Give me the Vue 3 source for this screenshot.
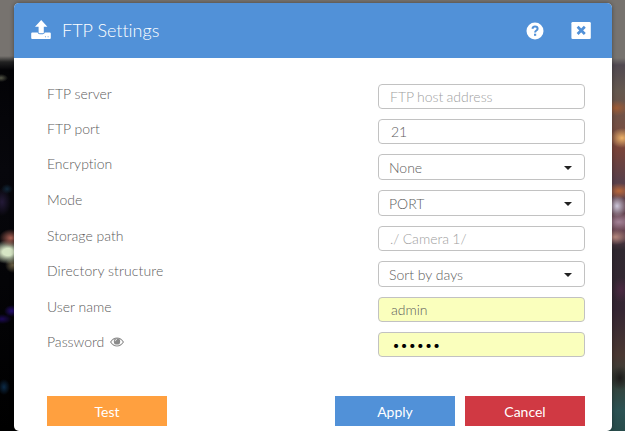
<script setup>
import { ref } from 'vue'

const fields = ref([
  { label: 'FTP server', type: 'text', value: '', placeholder: 'FTP host address' },
  { label: 'FTP port', type: 'text', value: '21' },
  { label: 'Encryption', type: 'select', value: 'None' },
  { label: 'Mode', type: 'select', value: 'PORT' },
  { label: 'Storage path', type: 'text', value: '', placeholder: './ Camera 1/' },
  { label: 'Directory structure', type: 'select', value: 'Sort by days', spaced: true },
  { label: 'User name', type: 'text', value: 'admin', filled: true },
  { label: 'Password', type: 'password', value: '••••••', filled: true }
])
</script>

<template>
  <div class="page">
    <div class="scene left"></div>
    <section class="dialog">
      <header class="head">
        <svg class="upload" viewBox="0 0 20 20" width="20" height="20">
          <path fill="#fff" d="M10.2 0 16.4 6.8H12.8V12.4Q12.8 13.3 11.9 13.3H8.5Q7.6 13.3 7.6 12.4V6.8H4Z" />
          <path fill="#fff" d="M1.2 12.4H6.6Q7 14.2 8.7 14.2H11.7Q13.4 14.2 13.8 12.4H18.8Q19.8 12.4 19.8 13.4V18Q19.8 19 18.8 19H1.2Q.2 19 .2 18V13.4Q.2 12.4 1.2 12.4Z" />
          <circle cx="14.4" cy="16.7" r=".55" fill="#5191d8" /><circle cx="17.1" cy="16.7" r=".55" fill="#5191d8" />
        </svg>
        <h1>FTP Settings</h1>
        <svg class="help" viewBox="0 0 18 18" width="18" height="18">
          <circle cx="9" cy="9" r="8.5" fill="#fff" />
          <path d="M6.4 6.7C6.7 5.2 7.6 4.6 9 4.6C10.5 4.6 11.6 5.4 11.6 6.7C11.6 8.6 9.1 8.5 9.1 10.5" fill="none" stroke="#5191d8" stroke-width="2" />
          <rect x="8" y="11.7" width="2.2" height="2.1" fill="#5191d8" />
        </svg>
        <svg class="close" viewBox="0 0 20 17" width="20" height="17">
          <rect x=".4" width="19.4" height="17" rx="1.3" fill="#fff" />
          <path d="M6.6 4.8 13.8 12M13.8 4.8 6.6 12" stroke="#5191d8" stroke-width="2.7" />
        </svg>
      </header>
      <div class="form">
        <div v-for="f in fields" :key="f.label" class="row">
          <div class="label" :class="{ spaced: f.spaced }">
            {{ f.label }}
            <svg v-if="f.type === 'password'" class="eye" viewBox="0 0 14 10" width="14" height="10">
              <path d="M.6 5Q3.2 1 7 1T13.4 5Q10.8 9 7 9T.6 5Z" fill="none" stroke="#8b8b8b" stroke-width="1.1" />
              <circle cx="7" cy="4.4" r="3.2" fill="#8b8b8b" />
              <path d="M5.1 4.2Q5.2 2.5 7 2.4" fill="none" stroke="#fff" stroke-width=".7" />
            </svg>
          </div>
          <div class="control" :class="[f.type, { filled: f.filled }]">
            <span :class="{ placeholder: !f.value }">{{ f.value || f.placeholder }}</span>
            <i v-if="f.type === 'select'" class="caret"></i>
          </div>
        </div>
      </div>
      <footer class="actions">
        <button class="test">Test</button>
        <button class="apply">Apply</button>
        <button class="cancel">Cancel</button>
      </footer>
    </section>
    <div class="scene right"></div>
  </div>
</template>

<style>
body { overflow: hidden; }
</style>

<style scoped>
.page {
  box-sizing: border-box;
  width: 625px;
  height: 431px;
  padding: 3px 13px 0 14px;
  position: relative;
  background: #77736f;
  font-family: Lato, sans-serif;
  font-weight: 300;
  font-size: 14px;
  font-variant-ligatures: none;
  color: #5c5c5c;
}
.scene { position: absolute; top: 0; bottom: 0; width: 24px; }
.left {
  left: 0;
  background:
    radial-gradient(ellipse 7px 4px at 1px 78px, #555748, transparent),
    radial-gradient(ellipse 6px 5px at 7px 189px, #11283a, transparent),
    radial-gradient(ellipse 9px 14px at 2px 202px, #241a38, transparent),
    radial-gradient(ellipse 12px 9px at 11px 238px, #b06558, transparent),
    radial-gradient(ellipse 18px 12px at 8px 252px, #d6e5c4 30%, transparent),
    radial-gradient(ellipse 8px 8px at 13px 265px, #756a4d, transparent),
    radial-gradient(ellipse 8px 6px at 12px 311px, #281078, transparent),
    radial-gradient(ellipse 10px 5px at 2px 319px, #1d0a58, transparent),
    radial-gradient(ellipse 6px 8px at 4px 387px, #0c2b48, transparent),
    linear-gradient(#77736f 0 56px, #222 62px, #030306 70px, #07070c 170px, #000 431px);
}
.right {
  right: 0;
  background:
    radial-gradient(ellipse 12px 10px at 21px 138px, #edb269, transparent),
    radial-gradient(ellipse 14px 8px at 15px 108px, #a05c35, transparent),
    radial-gradient(ellipse 14px 8px at 18px 191px, #b9683b, transparent),
    radial-gradient(ellipse 10px 11px at 16px 206px, #ccc6d9, transparent),
    radial-gradient(ellipse 16px 9px at 18px 222px, #a48297, transparent),
    radial-gradient(ellipse 14px 8px at 14px 237px, #b98a80, transparent),
    radial-gradient(ellipse 9px 13px at 20px 290px, #4b2942, transparent),
    radial-gradient(ellipse 10px 12px at 19px 378px, #1d1b1a, transparent),
    linear-gradient(#77736f 0 58px, #514951 65px, #64584f 90px, #755044 125px, #784339 150px, #59404a 180px, #694552 230px, #302830 250px, #352633 310px, #4a3832 355px, #34423b 385px, #2c5253 410px, #284c4b 431px);
}
.dialog {
  position: relative;
  z-index: 1;
  box-sizing: border-box;
  height: 428px;
  background: #fff;
  border-radius: 5px;
  box-shadow: 0 0 4px rgba(0, 0, 0, .4);
  overflow: hidden;
}
.head {
  box-sizing: border-box;
  height: 55px;
  padding: 0 21px 0 17px;
  display: flex;
  align-items: center;
  background: #5191d8;
}
h1 { flex: 1; margin: 0 0 1px 11px; font-size: 18px; line-height: 24px; font-weight: 300; color: #fff; }
.upload { margin-bottom: 2px; }
.close { margin-left: 27px; }
.form { display: grid; gap: 10px; padding: 26px 27px 0 33px; }
.row { display: flex; justify-content: space-between; align-items: flex-start; }
.label { display: flex; align-items: center; gap: 6px; line-height: 20px; height: 20px; }
.spaced { letter-spacing: .1px; }
.control {
  box-sizing: border-box;
  width: 207px;
  height: 25px;
  padding: 1px 12px 0;
  display: flex;
  align-items: center;
  justify-content: space-between;
  border: 1px solid #c2c2c2;
  border-radius: 4px;
  background: #fff;
  line-height: 22px;
}
.select { height: 26px; padding-left: 10px; }
.placeholder { color: #a0a0a0; margin-left: -1px; word-spacing: -.5px; }
.filled { background: #faffbd; }
.password { color: #000; padding-left: 13px; }
.caret { border: 4px solid transparent; border-top-color: #222; border-bottom: 0; }
.actions { display: flex; gap: 10px; padding: 39px 27px 0 33px; }
button {
  width: 120px;
  height: 30px;
  border: 0;
  padding: 0;
  color: #fff;
  font: 400 14px Lato, sans-serif;
}
.test { background: #ffa03f; margin-right: auto; }
.apply { background: #5191d8; }
.cancel { background: #d03943; }
</style>
